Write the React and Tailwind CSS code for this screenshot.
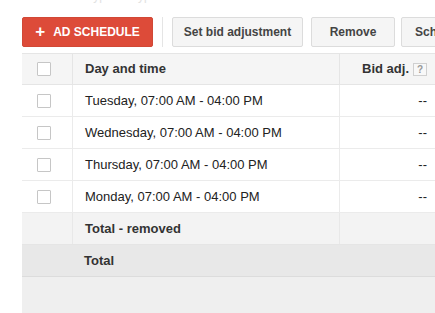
import React from "react";

const rows = [
    "Tuesday, 07:00 AM - 04:00 PM",
    "Wednesday, 07:00 AM - 04:00 PM",
    "Thursday, 07:00 AM - 04:00 PM",
    "Monday, 07:00 AM - 04:00 PM",
];

const Checkbox = () => (
    <div className="w-[14px] h-[14px] border border-[#c6c6c6] bg-white rounded-[1px]" />
);

const GrayButton = ({ children, className }) => (
    <button
        className={`h-[30px] shrink-0 bg-[#f5f5f5] border border-[#dcdcdc] rounded-[2px] text-[12px] font-bold text-[#444] ${className}`}
    >
        {children}
    </button>
);

const App = () => {
    return (
        <div
            className="w-[435px] h-[313px] bg-white overflow-hidden"
            style={{ fontFamily: '"Liberation Sans", Arial, sans-serif' }}
        >
            {/* cut-off caption above the toolbar */}
            <div className="h-[7px] overflow-hidden pl-[72px]">
                <div className="-mt-[11px] text-[12px] text-[#e2e2e2] leading-[14px]">Ad type: all types</div>
            </div>

            {/* Toolbar */}
            <div className="flex items-center pl-[22px] pt-[10px] whitespace-nowrap">
                <button className="w-[131px] shrink-0 h-[30px] bg-[#dd4b39] rounded-[2px] text-white text-[12px] font-bold flex items-center justify-center gap-[8px] border border-[#d14836]">
                    <span className="text-[17px] leading-none -mt-[1px]">+</span>
                    <span>AD SCHEDULE</span>
                </button>
                <div className="w-px h-[30px] shrink-0 bg-[#e5e5e5] ml-[9px] mr-[9px]" />
                <GrayButton className="w-[131px]">Set bid adjustment</GrayButton>
                <GrayButton className="w-[84px] ml-[8px]">Remove</GrayButton>
                <GrayButton className="w-[80px] ml-[6px] text-left pl-[13px]">Schedule</GrayButton>
            </div>

            {/* Table */}
            <div className="ml-[22px] mt-[6px] bg-[#efefef] h-[260px] text-[13px]">
                <div className="flex h-[32px] bg-[#f5f5f5] border-t border-b border-[#e5e5e5] items-center font-bold text-[#333]">
                    <div className="w-[51px] h-full flex items-center pl-[15px] border-r border-[#e5e5e5]">
                        <Checkbox />
                    </div>
                    <div className="w-[267px] h-full flex items-center pl-[12px] border-r border-[#e5e5e5]">Day and time</div>
                    <div className="flex-1 h-full flex items-center justify-end pr-[8px] gap-[4px]">
                        <span>Bid adj.</span>
                        <span className="w-[14px] h-[13px] border border-[#d0d0d0] bg-[#f8f8f8] text-[10px] text-[#999] flex items-center justify-center">?</span>
                    </div>
                </div>
                {rows.map((r) => (
                    <div key={r} className="flex h-[32px] bg-white border-b border-[#ebebeb] items-center text-[#222]">
                        <div className="w-[51px] h-full flex items-center pl-[15px] border-r border-[#ebebeb]">
                            <Checkbox />
                        </div>
                        <div className="w-[267px] h-full flex items-center pl-[12px] border-r border-[#ebebeb]">{r}</div>
                        <div className="flex-1 h-full flex items-center justify-end pr-[8px]">--</div>
                    </div>
                ))}
                <div className="flex h-[32px] bg-[#f3f3f3] border-b border-[#e5e5e5] items-center font-bold text-[#333]">
                    <div className="w-[51px] h-full border-r border-[#e8e8e8]" />
                    <div className="w-[267px] h-full flex items-center pl-[12px] border-r border-[#e8e8e8]">Total - removed</div>
                    <div className="flex-1 h-full" />
                </div>
                <div className="flex h-[32px] bg-[#e8e8e8] border-b border-[#dcdcdc] items-center font-bold text-[#333] pl-[62px]">
                    Total
                </div>
            </div>
        </div>
    );
};

export default App;
